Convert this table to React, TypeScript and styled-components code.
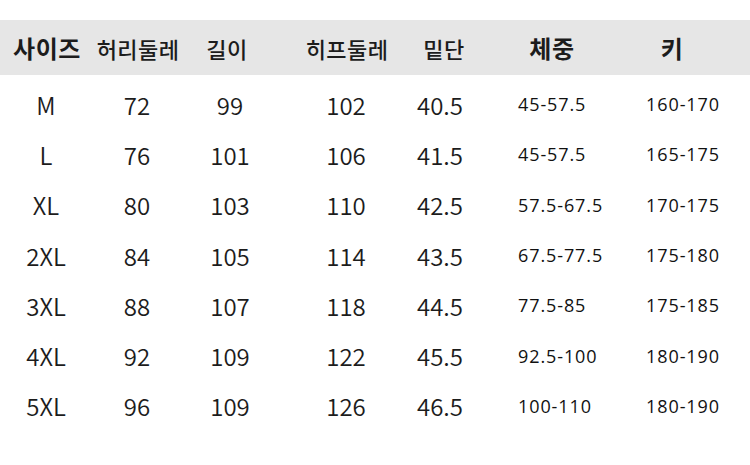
import React from "react";
import styled, { createGlobalStyle } from "styled-components";

const GlobalStyle = createGlobalStyle`
  html, body {
    margin: 0;
    padding: 0;
    background: #ffffff;
  }
`;

const COLUMNS = "92px 90px 96px 136px 52px 150px 134px";

type Row = {
  size: string;
  waist: string;
  length: string;
  hip: string;
  hem: string;
  weight: string;
  height: string;
};

const rows: Row[] = [
  { size: "M", waist: "72", length: "99", hip: "102", hem: "40.5", weight: "45-57.5", height: "160-170" },
  { size: "L", waist: "76", length: "101", hip: "106", hem: "41.5", weight: "45-57.5", height: "165-175" },
  { size: "XL", waist: "80", length: "103", hip: "110", hem: "42.5", weight: "57.5-67.5", height: "170-175" },
  { size: "2XL", waist: "84", length: "105", hip: "114", hem: "43.5", weight: "67.5-77.5", height: "175-180" },
  { size: "3XL", waist: "88", length: "107", hip: "118", hem: "44.5", weight: "77.5-85", height: "175-185" },
  { size: "4XL", waist: "92", length: "109", hip: "122", hem: "45.5", weight: "92.5-100", height: "180-190" },
  { size: "5XL", waist: "96", length: "109", hip: "126", hem: "46.5", weight: "100-110", height: "180-190" },
];

const Page = styled.div`
  width: 750px;
  height: 465px;
  padding-top: 20px;
  box-sizing: border-box;
  background: #ffffff;
  color: #1c1c1c;
  font-family: "Noto Sans CJK KR", "Noto Sans", sans-serif;
`;

const HeaderBar = styled.div`
  display: grid;
  grid-template-columns: ${COLUMNS};
  height: 55px;
  align-items: center;
  background: #e6e6e6;
  margin-bottom: 4px;
`;

const HeadCell = styled.div<{ $bold?: boolean; $shift?: number }>`
  text-align: center;
  font-size: ${(p) => (p.$bold ? "24px" : "22px")};
  font-weight: ${(p) => (p.$bold ? 700 : 500)};
  letter-spacing: ${(p) => (p.$bold ? "0.6px" : "0.4px")};
  transform: translateX(${(p) => p.$shift ?? 0}px);
  white-space: nowrap;
`;

const DataRow = styled.div`
  display: grid;
  grid-template-columns: ${COLUMNS};
  height: 50.3px;
  align-items: center;
`;

const Cell = styled.div`
  text-align: center;
  font-size: 24px;
  font-weight: 350;
  white-space: nowrap;
`;

const SmallCell = styled.div<{ $left?: number }>`
  font-family: "Open Sans", "Noto Sans", sans-serif;
  font-size: 18px;
  letter-spacing: 0.9px;
  color: #111111;
  white-space: nowrap;
  text-align: ${(p) => (p.$left !== undefined ? "left" : "center")};
  padding-left: ${(p) => p.$left ?? 0}px;
`;

export default function App() {
  return (
    <>
      <GlobalStyle />
      <Page>
        <HeaderBar>
          <HeadCell $bold $shift={1}>사이즈</HeadCell>
          <HeadCell $shift={1}>허리둘레</HeadCell>
          <HeadCell $shift={-3}>길이</HeadCell>
          <HeadCell $shift={1}>히프둘레</HeadCell>
          <HeadCell $shift={4}>밑단</HeadCell>
          <HeadCell $bold $shift={11}>체중</HeadCell>
          <HeadCell $bold $shift={-11}>키</HeadCell>
        </HeaderBar>
        {rows.map((r) => (
          <DataRow key={r.size}>
            <Cell>{r.size}</Cell>
            <Cell>{r.waist}</Cell>
            <Cell>{r.length}</Cell>
            <Cell>{r.hip}</Cell>
            <Cell>{r.hem}</Cell>
            <SmallCell $left={52}>{r.weight}</SmallCell>
            <SmallCell>{r.height}</SmallCell>
          </DataRow>
        ))}
      </Page>
    </>
  );
}
